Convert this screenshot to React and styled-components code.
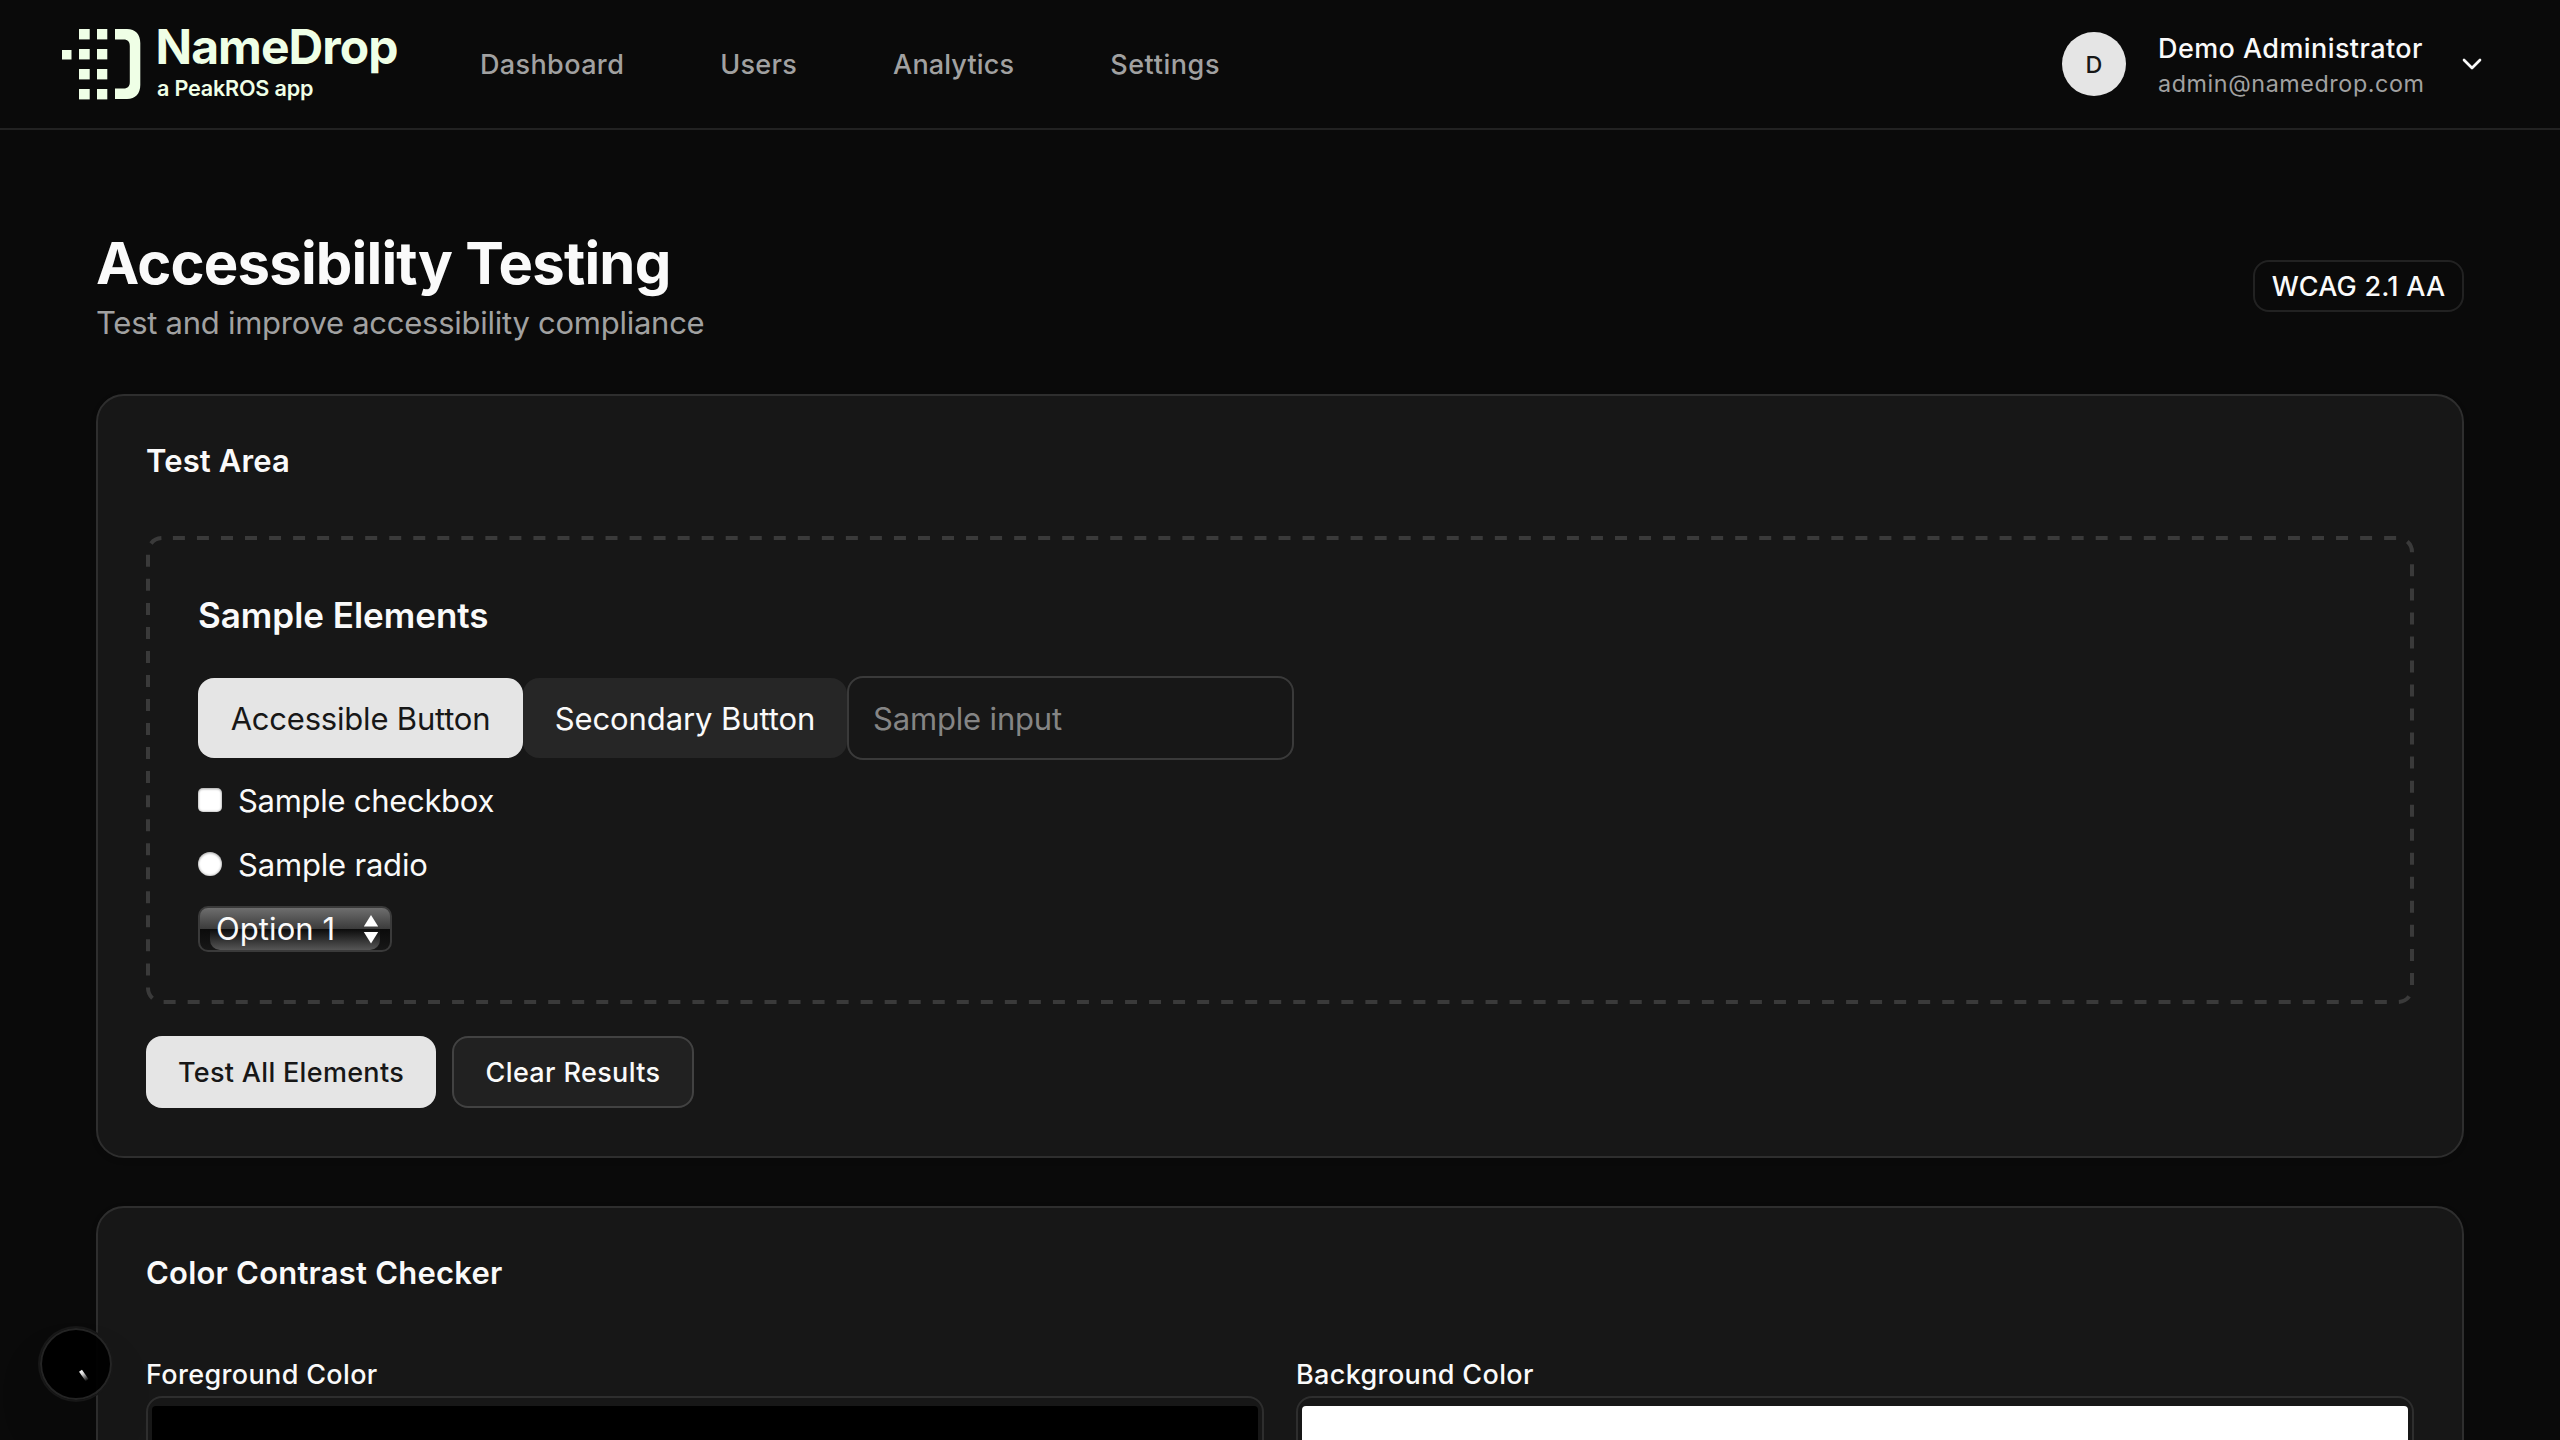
import React from "react";
import styled, { createGlobalStyle } from "styled-components";

const GlobalStyle = createGlobalStyle`
  *, *::before, *::after { box-sizing: border-box; }
  html, body { margin: 0; background: #0a0a0a; overflow: hidden; }
  body, button, input {
    font-family: Inter, "Liberation Sans", sans-serif;
    color: #fafafa;
  }
`;

const Page = styled.div`
  height: 1440px;
  overflow: hidden;
  background: #0a0a0a;
`;

/* ---------- header ---------- */

const Header = styled.header`
  display: flex;
  align-items: center;
  height: 130px;
  padding: 0 72px 0 62px;
  border-bottom: 2px solid #222222;
`;

const Brand = styled.a`
  display: flex;
  width: 418px;
  height: 128px;
  align-items: center;
  color: #efffe6;
`;

const BrandMark = styled.svg`
  display: block;
  width: 78px;
  height: 72px;
`;

const BrandText = styled.div`
  display: flex;
  flex-direction: column;
  align-self: flex-start;
  padding: 18px 0 0 15.5px;
`;

const BrandName = styled.span`
  font-size: 48px;
  font-weight: 700;
  line-height: 58px;
  letter-spacing: -0.95px;
`;

const BrandTag = styled.span`
  padding-left: 1.5px;
  font-size: 21.6px;
  font-weight: 600;
  line-height: 25px;
  letter-spacing: -0.2px;
`;

const Nav = styled.nav`
  display: flex;
  gap: 96px;
  flex: 1;
  padding-top: 2px;
`;

const NavLink = styled.a`
  font-size: 27px;
  font-weight: 500;
  line-height: 40px;
  letter-spacing: ${(p) => p.$track}px;
  color: #a1a1a1;
`;

const UserMenu = styled.div`
  display: flex;
  align-items: center;
  gap: 32px;
`;

const Avatar = styled.div`
  display: grid;
  place-items: center;
  width: 64px;
  height: 64px;
  border-radius: 50%;
  background: #e5e5e5;
  color: #171717;
  font-size: 23.3px;
  font-weight: 500;
`;

const UserInfo = styled.div`
  display: flex;
  flex-direction: column;
  width: 266px;
  padding-top: 2px;
  white-space: nowrap;
`;

const UserName = styled.span`
  font-size: 27px;
  font-weight: 500;
  line-height: 37px;
  letter-spacing: 0.42px;
`;

const UserEmail = styled.span`
  font-size: 23.3px;
  line-height: 33px;
  letter-spacing: 0.6px;
  color: #a1a1a1;
`;

/* ---------- page body ---------- */

const Main = styled.main`
  display: flex;
  flex-direction: column;
  gap: 48px;
  padding: 96px 96px 0;
`;

const PageHead = styled.div`
  display: flex;
  align-items: center;
  justify-content: space-between;
  height: 120px;
`;

const Title = styled.h1`
  margin: 0;
  padding-top: 1px;
  font-size: 58px;
  font-weight: 700;
  line-height: 72px;
  letter-spacing: -0.8px;
`;

const Subtitle = styled.p`
  margin: 0;
  font-size: 31px;
  line-height: 47px;
  letter-spacing: -0.263px;
  color: #a1a1a1;
`;

const Badge = styled.span`
  display: flex;
  align-items: center;
  justify-content: center;
  width: 211px;
  height: 52px;
  border: 2px solid #222222;
  border-radius: 16px;
  font-size: 27px;
  font-weight: 500;
  letter-spacing: 0.23px;
`;

const Card = styled.section`
  padding: 48px;
  border: 2px solid #2e2e2e;
  border-radius: 28px;
  background: #171717;
  box-shadow: 0 2px 6px rgba(0, 0, 0, 0.1);
`;

const CardTitle = styled.h2`
  margin: 0 0 59px;
  font-size: 31px;
  font-weight: 600;
  line-height: 33px;
  letter-spacing: ${(p) => p.$track}px;
`;

const SampleArea = styled.div`
  position: relative;
  height: 468px;
  padding: 52px;
`;

const DashedOutline = styled.svg`
  position: absolute;
  inset: 0;
  width: 100%;
  height: 100%;
  pointer-events: none;
`;

const SampleTitle = styled.h3`
  margin: 0 0 33px;
  font-size: 35px;
  font-weight: 600;
  line-height: 55px;
  letter-spacing: -0.02px;
`;

const ControlRow = styled.div`
  display: flex;
  align-items: center;
  height: 84px;
`;

const SampleButton = styled.button`
  width: ${(p) => p.$width}px;
  height: 80px;
  padding: 1px 0 0;
  border: 0;
  border-radius: 16px;
  background: ${(p) => (p.$primary ? "#e5e5e5" : "#262626")};
  color: ${(p) => (p.$primary ? "#171717" : "#fafafa")};
  font-size: 31px;
  letter-spacing: ${(p) => p.$track}px;
  white-space: nowrap;
`;

const SampleInput = styled.input`
  width: 447px;
  height: 84px;
  padding: 1px 24px 0;
  border: 2px solid #3a3a3a;
  border-radius: 16px;
  background: transparent;
  outline: none;
  font-size: 31px;
  letter-spacing: -0.17px;

  &::placeholder { color: #858585; opacity: 1; }
`;

const ChoiceRow = styled.label`
  display: flex;
  align-items: center;
  gap: 16px;
  height: 48px;
  margin-top: 16px;
  font-size: 31px;
  letter-spacing: ${(p) => p.$track}px;
`;

const ChoiceText = styled.span`
  padding-top: 1px;
  line-height: 47px;
`;

const ChoiceMark = styled.span`
  width: 24px;
  height: 24px;
  border-radius: ${(p) => (p.$round ? "50%" : "5px")};
  background: #ffffff;
  box-shadow: inset 0 0 2px 1px rgba(0, 0, 0, 0.22), inset 0 2px 2px rgba(0, 0, 0, 0.1);
`;

const SelectBox = styled.div`
  position: relative;
  display: flex;
  align-items: center;
  justify-content: space-between;
  width: 194px;
  height: 46px;
  margin-top: 18px;
  padding: 0 11px 0 16px;
  border: 2px solid #3a3a3a;
  border-radius: 10px;
  background: linear-gradient(#6e6e6e 0, #3b3b3b 21px, #0b0b0b 21px, #171717 100%);
  overflow: hidden;
  font-size: 31px;
  letter-spacing: 0.09px;

  &::before {
    content: "";
    position: absolute;
    left: 10px;
    right: 10px;
    top: 21px;
    bottom: 0;
    border-radius: 0 0 10px 10px;
    background: linear-gradient(#0b0b0b, #565656);
  }
`;

const SelectValue = styled.span`
  position: relative;
  line-height: 42px;
`;

const SelectArrows = styled.svg`
  position: relative;
  display: block;
  width: 16px;
  height: 30px;
`;

const Actions = styled.div`
  display: flex;
  gap: 16px;
  margin-top: 32px;
`;

const ActionButton = styled.button`
  width: ${(p) => p.$width}px;
  height: 72px;
  padding: 0;
  border: ${(p) => (p.$primary ? "0" : "2px solid #424242")};
  border-radius: 16px;
  background: ${(p) => (p.$primary ? "#e5e5e5" : "#212121")};
  color: ${(p) => (p.$primary ? "#171717" : "#fafafa")};
  font-size: 27px;
  font-weight: 500;
  letter-spacing: ${(p) => (p.$primary ? 0.31 : 0.365)}px;
  white-space: nowrap;
`;

const ColorGrid = styled.div`
  display: grid;
  grid-template-columns: 1fr 1fr;
  gap: 32px;
`;

const FieldLabel = styled.div`
  padding-top: 5px;
  font-size: 27px;
  font-weight: 500;
  line-height: 43px;
  height: 48px;
  letter-spacing: 0.35px;
`;

const ColorInput = styled.div`
  height: 80px;
  padding: 8px 4px;
  border: 2px solid #2e2e2e;
  border-radius: 16px;
`;

const Swatch = styled.div`
  height: 100%;
  border-radius: 4px;
  background: ${(p) => p.$color};
`;

const DevIndicator = styled.div`
  position: fixed;
  left: 40px;
  bottom: 40px;
  display: grid;
  place-items: center;
  width: 72px;
  height: 72px;
  border-radius: 50%;
  background: rgba(0, 0, 0, 0.94);
  box-shadow: 0 0 0 2px #171717, inset 0 0 0 2px rgba(255, 255, 255, 0.14),
    0 32px 64px -16px rgba(0, 0, 0, 0.24);
`;

const DOTS = [
  [0, 21, 9.5], [17, 0, 10.7], [17, 20, 10.7], [17, 40, 10.7], [17, 60, 10.7],
  [35, 0, 10.3], [35, 20, 10.3], [35, 40, 10.3], [35, 60, 10.3],
];

function Logo() {
  return (
    <BrandMark viewBox="0 0 78 72" fill="currentColor" overflow="visible">
      {DOTS.map(([x, y, w]) => (
        <rect key={`${x}-${y}`} x={x} y={y + 1} width={w} height={y === 21 ? 9.5 : 10.4} />
      ))}
      <path d="M53 1H65C73.500 1 78.300 6.500 78.300 15V57C78.300 65.500 73.500 71 65 71H53V60.500H61.500C66 60.500 67.800 58 67.800 54V18C67.800 14 66 11.500 61.500 11.500H53Z" />
    </BrandMark>
  );
}

export default function App() {
  return (
    <Page>
      <GlobalStyle />
      <Header>
        <Brand>
          <Logo />
          <BrandText>
            <BrandName>NameDrop</BrandName>
            <BrandTag>a PeakROS app</BrandTag>
          </BrandText>
        </Brand>
        <Nav>
          <NavLink $track={0.38}>Dashboard</NavLink>
          <NavLink $track={0.3}>Users</NavLink>
          <NavLink $track={0.14}>Analytics</NavLink>
          <NavLink $track={0.58}>Settings</NavLink>
        </Nav>
        <UserMenu>
          <Avatar>D</Avatar>
          <UserInfo>
            <UserName>Demo Administrator</UserName>
            <UserEmail>admin@namedrop.com</UserEmail>
          </UserInfo>
          <svg width="32" height="32" viewBox="0 0 24 24" fill="none" stroke="#fafafa" strokeWidth="2" strokeLinecap="round" strokeLinejoin="round">
            <path d="m6 9 6 6 6-6" />
          </svg>
        </UserMenu>
      </Header>

      <Main>
        <PageHead>
          <div>
            <Title>Accessibility Testing</Title>
            <Subtitle>Test and improve accessibility compliance</Subtitle>
          </div>
          <Badge>WCAG 2.1 AA</Badge>
        </PageHead>

        <Card>
          <CardTitle $track={0.14}>Test Area</CardTitle>
          <SampleArea>
            <DashedOutline viewBox="0 0 2268 468" aria-hidden="true">
              <rect x="2" y="2" width="2264" height="464" rx="14" fill="none" stroke="#3a3a3a" strokeWidth="4" strokeDasharray="12 12.035" strokeDashoffset="-10.9" />
            </DashedOutline>
            <SampleTitle>Sample Elements</SampleTitle>
            <ControlRow>
              <SampleButton $primary $width={325} $track={-0.2}>Accessible Button</SampleButton>
              <SampleButton $width={324} $track={-0.08}>Secondary Button</SampleButton>
              <SampleInput placeholder="Sample input" />
            </ControlRow>
            <ChoiceRow $track={-0.289}>
              <ChoiceMark />
              <ChoiceText>Sample checkbox</ChoiceText>
            </ChoiceRow>
            <ChoiceRow $track={-0.19}>
              <ChoiceMark $round />
              <ChoiceText>Sample radio</ChoiceText>
            </ChoiceRow>
            <SelectBox>
              <SelectValue>Option 1</SelectValue>
              <SelectArrows viewBox="0 0 16 30" fill="#ffffff">
                <path d="M8 1 15.200 12.500H0.800Z" />
                <path d="M8 29.500 15.200 18H0.800Z" />
              </SelectArrows>
            </SelectBox>
          </SampleArea>
          <Actions>
            <ActionButton $primary $width={290}>Test All Elements</ActionButton>
            <ActionButton $width={242}>Clear Results</ActionButton>
          </Actions>
        </Card>

        <Card>
          <CardTitle $track={0.21}>Color Contrast Checker</CardTitle>
          <ColorGrid>
            <div>
              <FieldLabel>Foreground Color</FieldLabel>
              <ColorInput><Swatch $color="#000000" /></ColorInput>
            </div>
            <div>
              <FieldLabel>Background Color</FieldLabel>
              <ColorInput><Swatch $color="#ffffff" /></ColorInput>
            </div>
          </ColorGrid>
        </Card>
      </Main>

      <DevIndicator>
        <svg width="40" height="40" viewBox="0 0 40 40">
          <defs>
            <linearGradient id="spark" x1="24" y1="26" x2="31" y2="37" gradientUnits="userSpaceOnUse">
              <stop offset="0" stopColor="#fff" />
              <stop offset="0.35" stopColor="#fff" stopOpacity="0.85" />
              <stop offset="1" stopColor="#fff" stopOpacity="0" />
            </linearGradient>
          </defs>
          <path d="M24.500 26.800 31.200 36.200" stroke="url(#spark)" strokeWidth="3.600" fill="none" />
        </svg>
      </DevIndicator>
    </Page>
  );
}
